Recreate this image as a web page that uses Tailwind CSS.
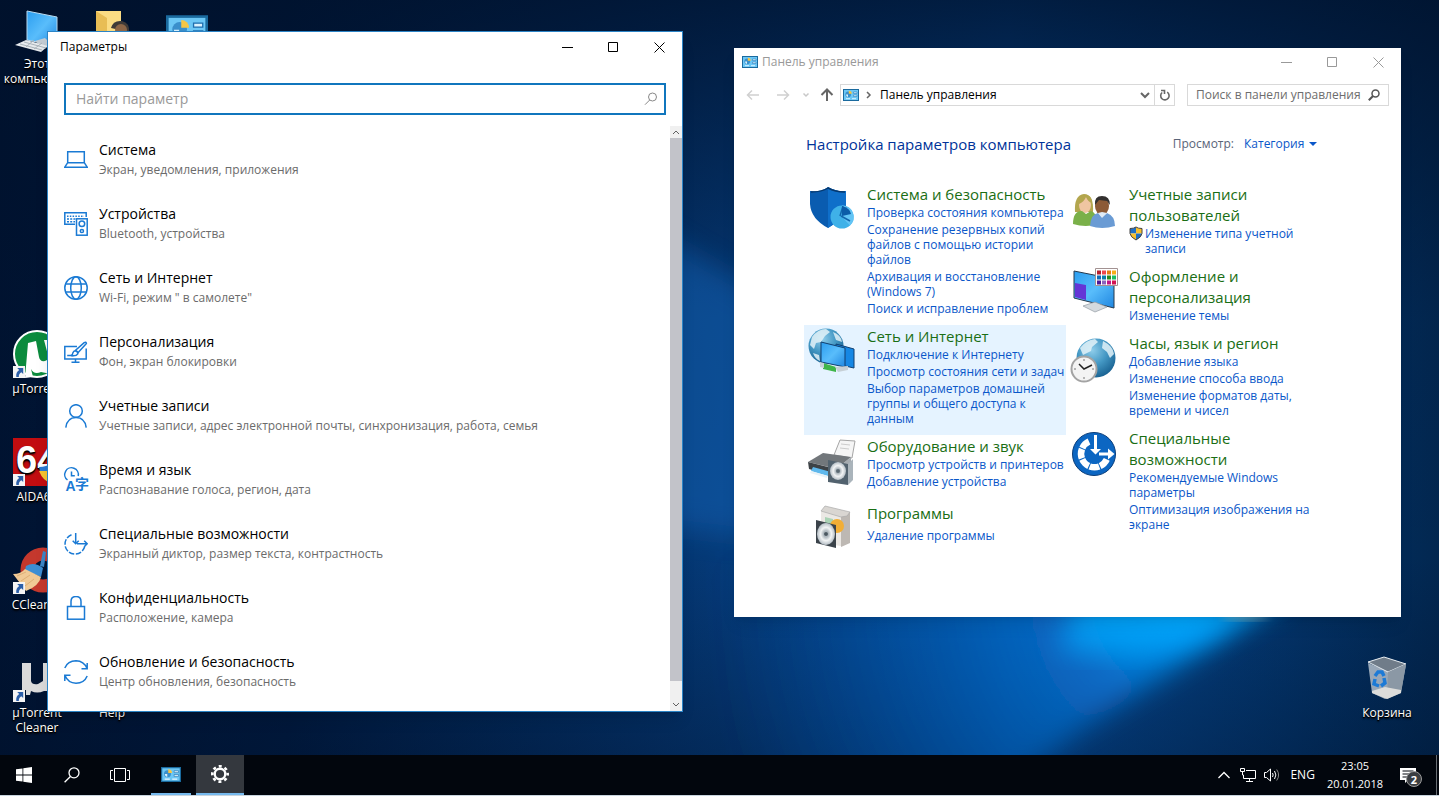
<!DOCTYPE html>
<html lang="ru">
<head>
    <meta charset="UTF-8">
    <meta name="viewport" content="width=device-width, initial-scale=1.0">
    <title>Рабочий стол</title>
    <script src="https://cdn.jsdelivr.net/npm/@tailwindcss/browser@4"></script>
</head>
<body class="relative h-screen overflow-hidden flex flex-col bg-[#001738] font-['Open_Sans','Noto_Sans_CJK_SC',sans-serif] text-xs text-black">

    <!-- общие значки -->
    <svg class="absolute w-0 h-0" aria-hidden="true">
        <defs>
            <linearGradient id="screen" x1="0" y1="0" x2="1" y2="1">
                <stop offset="0" stop-color="#2a9df0"/><stop offset="0.5" stop-color="#59bdfb"/><stop offset="1" stop-color="#1f86e0"/>
            </linearGradient>
            <radialGradient id="earth" cx="0.4" cy="0.3" r="0.75">
                <stop offset="0" stop-color="#8fcdea"/><stop offset="0.5" stop-color="#4498c4"/><stop offset="1" stop-color="#165e8e"/>
            </radialGradient>
            <radialGradient id="disc">
                <stop offset="0" stop-color="#fff"/><stop offset="0.25" stop-color="#aab4bb"/><stop offset="0.6" stop-color="#f2f4f5"/><stop offset="1" stop-color="#b5bec5"/>
            </radialGradient>
            <symbol id="panel" viewBox="0 0 16 12">
                <rect x="0.5" y="0.5" width="15" height="11" fill="#6cc7f5" stroke="#1a6a9e"/>
                <circle cx="5.2" cy="5.4" r="2.8" fill="#3a8fcb"/>
                <path d="M5.8 4.8V1.8a3 3 0 0 1 3 3z" fill="#f6c644"/>
                <path d="M3 5.5h2v2.5a2.6 2.6 0 0 1-2-2.5z" fill="#d9f1fd"/>
                <path d="M10.5 3h3.5v1.5h-3.5zM10.5 6h3.5v1.5h-3.5z" fill="#d9f1fd" stroke="#1f6fae" stroke-width="0.5"/>
                <path d="M3 9.7h4M9 9.7h4" stroke="#e8f8ff" stroke-width="0.9"/>
            </symbol>
            <symbol id="shortcut" viewBox="0 0 12 12">
                <rect width="12" height="12" fill="#f4f4f4"/>
                <path d="M4.2 2h6v6L8.3 6.300C6.300 7.500 5.800 9 5.800 11H3.300C2.800 8 4 5.300 6.200 4z" fill="#2b5ea8"/>
            </symbol>
        </defs>
    </svg>

    <!-- обои -->
    <svg class="absolute inset-0 w-full h-full" viewBox="0 0 1439 796" preserveAspectRatio="none" aria-hidden="true">
        <defs>
            <linearGradient id="sky">
                <stop offset="0" stop-color="#001331"/><stop offset="0.2" stop-color="#001a40"/><stop offset="0.5" stop-color="#053a78"/>
                <stop offset="0.7" stop-color="#0650a0"/><stop offset="0.9" stop-color="#03356c"/><stop offset="1" stop-color="#022750"/>
            </linearGradient>
            <linearGradient id="shade" x2="0" y2="1">
                <stop offset="0" stop-color="#00112b" stop-opacity="0.8"/><stop offset="0.4" stop-color="#00112b" stop-opacity="0.1"/>
                <stop offset="0.7" stop-color="#00112b" stop-opacity="0"/><stop offset="1" stop-color="#00112b" stop-opacity="0.45"/>
            </linearGradient>
            <radialGradient id="glow" cx="1190" cy="600" r="480" gradientUnits="userSpaceOnUse">
                <stop offset="0" stop-color="#00a5ff"/><stop offset="0.25" stop-color="#0a78dc" stop-opacity="0.75"/><stop offset="0.6" stop-color="#0862c0" stop-opacity="0.45"/><stop offset="1" stop-color="#0450a8" stop-opacity="0"/>
            </radialGradient>
            <filter id="soft" x="-20%" y="-20%" width="140%" height="140%"><feGaussianBlur stdDeviation="14"/></filter>
            <filter id="fine" x="-20%" y="-50%" width="140%" height="200%"><feGaussianBlur stdDeviation="5"/></filter>
        </defs>
        <rect width="1439" height="796" fill="url(#sky)"/>
        <rect width="1439" height="796" fill="url(#shade)"/>
        <path d="M1290 600L600 200V520L1290 600z" fill="#1268bd" opacity="0.45" filter="url(#soft)"/>
        <path d="M1290 580L1210 645L1080 730L980 810H740L720 560z" fill="url(#glow)" filter="url(#soft)"/>
        <path d="M1290 598L1215 634L1130 656L1060 650L1080 590z" fill="#00aaff" opacity="0.7" filter="url(#soft)"/>
        <ellipse cx="1245" cy="616" rx="24" ry="3" fill="#d8d0a8" opacity="0.6" filter="url(#fine)"/>
    </svg>

    <main class="relative flex-1">
        <!-- значки рабочего стола -->
        <a href="#" class="absolute left-0 top-2 w-[74px] flex flex-col items-center text-center text-white leading-[15px] text-shadow-sm text-shadow-black">
            <svg class="w-12 h-12" viewBox="0 0 48 48">
                <path d="M14 3l30 6v29l-30-6z" fill="url(#screen)" stroke="#b9d9ee"/>
                <path d="M22 33l10-3 8 8-10 2z" fill="#c3cbd2"/>
                <path d="M13 32l22 6-7 6-26-7z" fill="#e6eaed"/>
                <path d="M7 36l22 6M11 34l22 6M13 39l8-7M21 41l8-6" stroke="#a9b2b9" fill="none"/>
            </svg>
            <span>Этот компьютер</span>
        </a>
        <svg class="absolute left-[88px] top-2 w-12 h-12" viewBox="0 0 48 48">
            <path d="M8 3h25v40H8z" fill="#fbdc83"/><path d="M8 3l11 7v36L8 42z" fill="#e8bd55"/>
            <path d="M23 20q2-8 11-7 8 2 7 11z" fill="#3f3a37"/><circle cx="33" cy="22" r="6" fill="#8d6647"/>
        </svg>
        <svg class="absolute left-[166px] top-[15px] w-[42px] h-8"><use href="#panel"/></svg>
        <a href="#" class="absolute left-0 top-[330px] w-[74px] flex flex-col items-center text-center text-white leading-[15px] text-shadow-sm text-shadow-black">
            <svg class="w-12 h-[51px]" viewBox="0 0 48 51">
                <circle cx="24" cy="24" r="23" fill="#0b8b3d" stroke="#fff" stroke-width="2"/>
                <path d="M15 13l8-2 3 16q1 5 6 4l4-2-5-19h7v34l-10-2q-7 3-10-3l2 8-8 1z" fill="#fff"/>
                <use href="#shortcut" x="0" y="36" width="12" height="12"/>
            </svg>
            <span>µTorrent</span>
        </a>
        <a href="#" class="absolute left-0 top-[438px] w-[74px] flex flex-col items-center text-center text-white leading-[15px] text-shadow-sm text-shadow-black">
            <svg class="w-12 h-[51px]" viewBox="0 0 48 51">
                <rect width="48" height="48" fill="#c20d10"/>
                <text x="3" y="35" font-family="Liberation Sans" font-size="38" font-weight="bold" fill="#fff">64</text>
                <path d="M26 29q8 0 12-4v20q-10-3-12-16z" fill="#2a79d2"/><path d="M26 33h12v12q-8-2-12-12z" fill="#f5c430"/>
                <use href="#shortcut" x="0" y="36" width="12" height="12"/>
            </svg>
            <span>AIDA64</span>
        </a>
        <a href="#" class="absolute left-0 top-[546px] w-[74px] flex flex-col items-center text-center text-white leading-[15px] text-shadow-sm text-shadow-black">
            <svg class="w-12 h-[51px]" viewBox="0 0 48 51">
                <circle cx="30" cy="24" r="16" fill="none" stroke="#c4382d" stroke-width="13"/>
                <path d="M27 20l3-15 3 1-2 15z" fill="#3d86c6"/>
                <path d="M13 20q8-5 17 2l-2 9-16-7z" fill="#3c8ed4"/>
                <path d="M12 23l16 8q-2 9-15 14L0 28q8 0 12-5z" fill="#f0c995"/>
                <path d="M4 30l9-4M8 35l9-6M12 40l9-7" stroke="#deb077" fill="none"/>
                <use href="#shortcut" x="0" y="36" width="12" height="12"/>
            </svg>
            <span>CCleaner</span>
        </a>
        <a href="#" class="absolute left-0 top-[654px] w-[74px] flex flex-col items-center text-center text-white leading-[15px] text-shadow-sm text-shadow-black">
            <svg class="w-12 h-[51px]" viewBox="0 0 48 51">
                <path d="M9 9h9v18q1 4 7 3l5-3V9h9v28h-8q-7 3-13 0l-1 4H13V36H9z" fill="#dadada"/>
                <use href="#shortcut" x="0" y="36" width="12" height="12"/>
            </svg>
            <span>µTorrent Cleaner</span>
        </a>
        <a href="#" class="absolute left-[76px] top-[705px] w-[72px] text-center text-white leading-[15px] text-shadow-sm text-shadow-black">Help</a>
        <a href="#" class="absolute right-4 top-[654px] w-[72px] flex flex-col items-center text-center text-white leading-[15px] text-shadow-sm text-shadow-black">
            <svg class="w-12 h-[51px]" viewBox="0 0 48 51">
                <path d="M5 9l19 8 19-6-5 27-16 7L9 39z" fill="#a9b6c3" opacity="0.9"/>
                <path d="M5 8l16-5 22 7-18 8z" fill="#707c89" stroke="#e9eef2"/>
                <path d="M25 18l18-8-5 29-14 6z" fill="#8b98a5"/>
                <path d="M9 37l13-4 16 3v3l-14 6-15-6z" fill="#dcdcda"/>
                <path d="M12 22l3-4h4l2 4M21 24l1 5-4 3M16 32l-5-2 1-5" fill="none" stroke="#1c7ad6" stroke-width="3.500"/>
            </svg>
            <span>Корзина</span>
        </a>

        <!-- Параметры -->
        <section class="absolute left-[47px] top-[31px] w-[636px] bg-white border border-[#2b84c6] shadow-lg">
            <header class="flex items-center pl-3">
                <h1 class="flex-1 leading-[30px]">Параметры</h1>
                <button class="w-[46px] h-[30px] grid place-items-center" aria-label="Свернуть"><svg class="w-[11px] h-[11px]" viewBox="0 0 11 11" stroke="#000" fill="none"><path d="M0 5.500h11"/></svg></button>
                <button class="w-[46px] h-[30px] grid place-items-center" aria-label="Развернуть"><svg class="w-[11px] h-[11px]" viewBox="0 0 11 11" stroke="#000" fill="none"><path d="M0.500 0.500h9v9h-9z"/></svg></button>
                <button class="w-[46px] h-[30px] grid place-items-center" aria-label="Закрыть"><svg class="w-[11px] h-[11px]" viewBox="0 0 11 11" stroke="#000" fill="none"><path d="M0.500 0.500l10 10M10.500 0.500l-10 10"/></svg></button>
            </header>
            <div class="mt-[21px] mx-4 h-8 flex items-center border-2 border-[#1076bd] pl-2.5 pr-1.5">
                <input type="text" aria-label="Найти параметр" placeholder="Найти параметр" class="flex-1 text-sm outline-none placeholder:text-[#999999]">
                <svg class="w-3.5 h-3.5" viewBox="0 0 14 14" fill="none" stroke="#888"><circle cx="8.500" cy="5" r="4"/><path d="M5.700 8L1 12.700"/></svg>
            </div>
            <div class="mt-[11px] flex">
                <ul class="flex-1 pl-4 pt-0.5 pb-[7px] text-[#1a7ad4]">
                    <li><a href="#" class="h-16 flex items-center gap-[11px]">
                        <svg class="w-6 h-6" viewBox="0 0 24 24" fill="none" stroke="currentColor" stroke-width="1.500"><path d="M3.700 14.500V3.700h16.600v10.800M3.700 14.700h16.600l2.900 4.500H0.800z"/></svg>
                        <span class="leading-5 text-[#6b6b6b]"><span class="block text-sm leading-5 text-black">Система</span>Экран, уведомления, приложения</span>
                    </a></li>
                    <li><a href="#" class="h-16 flex items-center gap-[11px]">
                        <svg class="w-6 h-6" viewBox="0 0 24 24" fill="none" stroke="currentColor" stroke-width="1.500"><path d="M11 12.300H0.800V0.800h21.400V5"/><path d="M3 4.200h17" stroke-dasharray="1.500 1.300"/><path d="M3 7h8.500M3 9.800h8" stroke-dasharray="2 1.200"/><rect x="12.500" y="6.800" width="10.700" height="16.400"/><circle cx="17.900" cy="11.800" r="2.800"/><circle cx="17.900" cy="19" r="1.600"/></svg>
                        <span class="leading-5 text-[#6b6b6b]"><span class="block text-sm leading-5 text-black">Устройства</span>Bluetooth, устройства</span>
                    </a></li>
                    <li><a href="#" class="h-16 flex items-center gap-[11px]">
                        <svg class="w-6 h-6" viewBox="0 0 24 24" fill="none" stroke="currentColor" stroke-width="1.500"><circle cx="12" cy="12" r="11.200"/><ellipse cx="12" cy="12" rx="5.300" ry="11.200"/><path d="M2 8h20M2 16h20"/></svg>
                        <span class="leading-5 text-[#6b6b6b]"><span class="block text-sm leading-5 text-black">Сеть и Интернет</span>Wi-Fi, режим " в самолете"</span>
                    </a></li>
                    <li><a href="#" class="h-16 flex items-center gap-[11px]">
                        <svg class="w-6 h-6" viewBox="0 0 24 24" fill="none" stroke="currentColor" stroke-width="1.500"><path d="M13 6.500H0.800v12.400h21.400V8.500M11.500 19v3M7.500 22.200h8"/><path d="M20.200 2.700q2-1.200 2.200 0.800l-8.200 9-2.600-2.200z"/><path d="M11.300 10.800q2.600 0.500 2.500 3-1.500 2.500-6.800 1.700 1.800-0.500 1.800-2.500 0.700-2.200 2.500-2.200z"/><path d="M3.200 15.500h6"/></svg>
                        <span class="leading-5 text-[#6b6b6b]"><span class="block text-sm leading-5 text-black">Персонализация</span>Фон, экран блокировки</span>
                    </a></li>
                    <li><a href="#" class="h-16 flex items-center gap-[11px]">
                        <svg class="w-6 h-6" viewBox="0 0 24 24" fill="none" stroke="currentColor" stroke-width="1.500"><circle cx="12" cy="7" r="6.300"/><path d="M1.800 23.700q1.200-10.200 10.200-10.200t10.200 10.200"/></svg>
                        <span class="leading-5 text-[#6b6b6b]"><span class="block text-sm leading-5 text-black">Учетные записи</span>Учетные записи, адрес электронной почты, синхронизация, работа, семья</span>
                    </a></li>
                    <li><a href="#" class="h-16 flex items-center gap-[11px]">
                        <svg class="w-6 h-6 overflow-visible" viewBox="0 0 24 24" fill="none" stroke="currentColor" stroke-width="1.500"><path d="M3.500 12A6.800 6.800 0 1 1 14.200 8M7.500 3.500v4.200h3.300"/><text x="1.500" y="23" font-family="Liberation Sans" font-size="14" font-weight="bold" fill="currentColor" stroke="none">A</text><text x="11" y="21" font-family="Noto Sans CJK SC" font-size="14" font-weight="bold" fill="currentColor" stroke="none">字</text></svg>
                        <span class="leading-5 text-[#6b6b6b]"><span class="block text-sm leading-5 text-black">Время и язык</span>Распознавание голоса, регион, дата</span>
                    </a></li>
                    <li><a href="#" class="h-16 flex items-center gap-[11px]">
                        <svg class="w-6 h-6" viewBox="0 0 24 24" fill="none" stroke="currentColor" stroke-width="1.500"><path d="M7.500 2.700A10 10 0 1 0 20.700 14.500" stroke-dasharray="5.500 1.600"/><path d="M11.700 1v10.500M8.700 8.700l3 3 3-3M13 11.800h10M20.200 8.800l3 3-3 3"/></svg>
                        <span class="leading-5 text-[#6b6b6b]"><span class="block text-sm leading-5 text-black">Специальные возможности</span>Экранный диктор, размер текста, контрастность</span>
                    </a></li>
                    <li><a href="#" class="h-16 flex items-center gap-[11px]">
                        <svg class="w-6 h-6" viewBox="0 0 24 24" fill="none" stroke="currentColor" stroke-width="1.500"><rect x="3.500" y="10.500" width="17" height="12.700"/><path d="M7 10.500V5.500q0-5 5-5t5 5v5"/></svg>
                        <span class="leading-5 text-[#6b6b6b]"><span class="block text-sm leading-5 text-black">Конфиденциальность</span>Расположение, камера</span>
                    </a></li>
                    <li><a href="#" class="h-16 flex items-center gap-[11px]">
                        <svg class="w-6 h-6" viewBox="0 0 24 24" fill="none" stroke="currentColor" stroke-width="1.500"><path d="M0.800 8Q3.800 0.800 12 0.800q8 0.200 11 7.700M23.200 3v5.700h-5.700M23.200 16q-3 7.200-11.200 7.200-8-0.200-11-7.700M0.800 21v-5.700h5.700"/></svg>
                        <span class="leading-5 text-[#6b6b6b]"><span class="block text-sm leading-5 text-black">Обновление и безопасность</span>Центр обновления, безопасность</span>
                    </a></li>
                </ul>
                <div class="w-3 flex flex-col items-center justify-between bg-[#f0f0f0]">
                    <svg class="w-2 h-3" viewBox="0 0 8 12" fill="none" stroke="#606060"><path d="M1 8l3-3 3 3"/></svg>
                    <div class="flex-1 w-full bg-[#c2c3c9] mb-[18px]"></div>
                    <svg class="w-2 h-3" viewBox="0 0 8 12" fill="none" stroke="#606060"><path d="M1 4l3 3 3-3"/></svg>
                </div>
            </div>
        </section>

        <!-- Панель управления -->
        <section class="absolute left-[734px] top-12 w-[667px] bg-white shadow-lg pb-[66px]">
            <header class="flex items-center pl-2 gap-1 text-[#999999]">
                <svg class="w-4 h-3"><use href="#panel"/></svg>
                <h1 class="flex-1 leading-[28px]">Панель управления</h1>
                <button class="w-[46px] h-7 grid place-items-center" aria-label="Свернуть"><svg class="w-[11px] h-[11px]" viewBox="0 0 11 11" stroke="currentColor" fill="none"><path d="M0 5.500h11"/></svg></button>
                <button class="w-[46px] -ml-1 h-7 grid place-items-center" aria-label="Развернуть"><svg class="w-[11px] h-[11px]" viewBox="0 0 11 11" stroke="currentColor" fill="none"><path d="M0.500 0.500h9v9h-9z"/></svg></button>
                <button class="w-[46px] -ml-1 h-7 grid place-items-center" aria-label="Закрыть"><svg class="w-[11px] h-[11px]" viewBox="0 0 11 11" stroke="currentColor" fill="none"><path d="M0.500 0.500l10 10M10.500 0.500l-10 10"/></svg></button>
            </header>
            <nav class="mt-2 pl-3 pr-3 flex items-center">
                <button class="w-[30px]" aria-label="Назад"><svg class="w-3.5 h-3" viewBox="0 0 14 12" fill="none" stroke="#d0d0d0" stroke-width="1.500"><path d="M13 6H2M6 1.500L1.500 6 6 10.500"/></svg></button>
                <button class="w-[26px]" aria-label="Вперед"><svg class="w-3.5 h-3" viewBox="0 0 14 12" fill="none" stroke="#d0d0d0" stroke-width="1.500"><path d="M1 6h11M8 1.500L12.500 6 8 10.500"/></svg></button>
                <button class="w-[18px]" aria-label="Последние места"><svg class="w-2 h-2" viewBox="0 0 8 8" fill="none" stroke="#c8c8c8" stroke-width="1.500"><path d="M1.500 2.500L4 5l2.500-2.500"/></svg></button>
                <button class="w-5" aria-label="Вверх"><svg class="w-3.5 h-3.5" viewBox="0 0 14 14" fill="none" stroke="#666" stroke-width="2"><path d="M7 13V2M1.500 7L7 1.500 12.500 7"/></svg></button>
                <div class="flex-1 h-[22px] flex items-center border border-[#d9d9d9] pl-0.5">
                    <svg class="w-4 h-3"><use href="#panel"/></svg>
                    <svg class="ml-1.5 w-2 h-2" viewBox="0 0 8 8" fill="none" stroke="#666" stroke-width="1.500"><path d="M2 1l3 3-3 3"/></svg>
                    <a href="#" class="ml-[7px] flex-1">Панель управления</a>
                    <button class="w-[18px] grid place-items-center" aria-label="Журнал"><svg class="w-2.5 h-2.5" viewBox="0 0 10 10" fill="none" stroke="#666" stroke-width="2"><path d="M1 3l4 4 4-4"/></svg></button>
                    <button class="w-5 h-full border-l border-[#d9d9d9] grid place-items-center" aria-label="Обновить"><svg class="w-3 h-3" viewBox="0 0 12 12" fill="none" stroke="#666" stroke-width="1.600"><path d="M8.200 3.200A4.200 4.200 0 1 1 3.200 3.500M2 1.500h3.500v3.500"/></svg></button>
                </div>
                <div class="ml-3 w-[202px] h-[22px] flex items-center border border-[#d9d9d9] pl-2 pr-2">
                    <input type="text" aria-label="Поиск в панели управления" placeholder="Поиск в панели управления" class="min-w-0 flex-1 outline-none placeholder:text-[#6d6d6d]">
                    <svg class="w-3 h-3" viewBox="0 0 12 12" fill="none" stroke="#555" stroke-width="1.500"><circle cx="7.500" cy="4.500" r="3.500"/><path d="M5 7L0.800 11.200" stroke-width="2"/></svg>
                </div>
            </nav>
            <div class="mt-[27px] pl-[72px] pr-[84px] flex items-center">
                <h2 class="flex-1 text-[15px] leading-[22px] text-[#003399]">Настройка параметров компьютера</h2>
                <label for="view" class="text-[#5a6478]">Просмотр:</label>
                <select id="view" class="ml-2.5 appearance-none text-[#0a57c9]"><option>Категория</option></select>
                <svg class="ml-1 w-2 h-1" viewBox="0 0 8 4"><path d="M0 0h8L4 4z" fill="#0a57c9"/></svg>
            </div>

            <div class="mt-7 ml-[70px] w-[524px] grid grid-cols-2 items-start text-[#0a57c9] leading-[15px]">
                <div>
                    <article class="flex gap-[11px] pl-1 pt-px pb-[9px]">
                        <svg class="shrink-0 w-12 h-12" viewBox="0 0 48 48">
                            <path d="M2 7Q14 8 20 3q8 5 18 4v13q-1 14-18 24Q3 35 2 20z" fill="#0a5cb0"/><path d="M20 3q8 5 18 4v13q-1 14-18 24z" fill="#0f6fca"/><path d="M3 8q11 0 17-4 7 4 17 4" fill="none" stroke="#06396f" stroke-width="1.500"/>
                            <circle cx="34" cy="33" r="11.500" fill="#3fb1e8"/><path d="M34 33V21.500a11.500 11.500 0 0 1 8 20z" fill="#62c4f5"/><path d="M32 32l3-10M33 32l9 5" stroke="#1266ad" stroke-width="1.500"/><path d="M34 32V22q8 2 9 8z" fill="#0b5ca8"/>
                        </svg>
                        <div>
                            <h3 class="text-[15px] leading-[21px] text-[#1a6e14]"><a href="#">Система и безопасность</a></h3>
                            <ul class="flex flex-col gap-0.5">
                                <li><a href="#">Проверка состояния компьютера</a></li>
                                <li><a href="#">Сохранение резервных копий<br>файлов с помощью истории<br>файлов</a></li>
                                <li><a href="#">Архивация и восстановление<br>(Windows 7)</a></li>
                                <li><a href="#">Поиск и исправление проблем</a></li>
                            </ul>
                        </div>
                    </article>
                    <article class="flex gap-[11px] pl-1 pt-px pb-[9px] bg-[#e5f3ff]">
                        <svg class="shrink-0 w-12 h-12" viewBox="0 0 48 48">
                            <circle cx="18" cy="20" r="17.500" fill="url(#earth)"/><path d="M4 11q6-8 14-8l4 3-5 4-4 6-5 1-2 6-4-4zM25 6q8 3 9 10l-6-2zM5 27l6 2 1 6q-5-2-7-8z" fill="#e3f2f8" opacity="0.85"/>
                            <path d="M28 18l18 5v19l-18-4z" fill="#1687e4" stroke="#103f70"/><path d="M13 16l24 6v19l-24-5z" fill="url(#screen)" stroke="#103f70"/>
                            <path d="M15 37l13 4v5l-13-3z" fill="#3fb549"/><path d="M12 36l4 1v5l-4-1zM27 41l13-1v4l-10 2z" fill="#c7d0d6"/>
                        </svg>
                        <div>
                            <h3 class="text-[15px] leading-[21px] text-[#1a6e14]"><a href="#">Сеть и Интернет</a></h3>
                            <ul class="flex flex-col gap-0.5">
                                <li><a href="#">Подключение к Интернету</a></li>
                                <li><a href="#">Просмотр состояния сети и задач</a></li>
                                <li><a href="#">Выбор параметров домашней<br>группы и общего доступа к<br>данным</a></li>
                            </ul>
                        </div>
                    </article>
                    <article class="min-h-[67px] flex gap-[11px] pl-1 pt-px pb-[9px]">
                        <svg class="shrink-0 mt-0.5 w-12 h-12" viewBox="0 0 48 48">
                            <path d="M32 2l15 1-3 17-18-3z" fill="#f5f5f5" stroke="#a5a5a5"/><path d="M33 6l9 1M32 10l9 1" stroke="#ccc"/>
                            <path d="M0 24l15-9 28 4-14 12z" fill="#72777b"/><path d="M0 24l28 7v8L1 31z" fill="#3d4246"/><path d="M28 31l15-12v9L29 39z" fill="#a5abb0"/>
                            <path d="M5 29l18 5-3 4L3 33z" fill="#5fb8ec"/><path d="M3 33l17 5-1 2L2 35z" fill="#e9f2f7"/>
                            <path d="M20 22l20 4v21l-20-3z" fill="#52626e"/><path d="M40 26l5-5v21l-5 5z" fill="#aab4bb"/><ellipse cx="30" cy="33" rx="8" ry="9" fill="url(#disc)"/><circle cx="30" cy="33" r="2" fill="#5a6872"/>
                        </svg>
                        <div>
                            <h3 class="text-[15px] leading-[21px] text-[#1a6e14]"><a href="#">Оборудование и звук</a></h3>
                            <ul class="flex flex-col gap-0.5">
                                <li><a href="#">Просмотр устройств и принтеров</a></li>
                                <li><a href="#">Добавление устройства</a></li>
                            </ul>
                        </div>
                    </article>
                    <article class="flex gap-[11px] pl-1 pt-px">
                        <svg class="shrink-0 w-12 h-12" viewBox="0 0 48 48">
                            <path d="M13 8l20 4v31l-20-3z" fill="#ebe8e4"/><path d="M33 12l9-3v31l-9 4z" fill="#bdb8b3"/><path d="M13 8l4-5 25 6-3 4-6 1z" fill="#d9d6d2" stroke="#aaa" stroke-width="0.700"/>
                            <path d="M17 14l8 2v10l-8-2z" fill="#a9d2b4"/><circle cx="29" cy="23" r="7" fill="#f2ae35"/>
                            <path d="M8 17l20 5v23L8 40z" fill="#3b434a"/><ellipse cx="18" cy="31" rx="9" ry="11" fill="url(#disc)"/><circle cx="18" cy="31" r="2" fill="#4b5861"/>
                        </svg>
                        <div>
                            <h3 class="text-[15px] leading-[21px] text-[#1a6e14]"><a href="#">Программы</a></h3>
                            <p class="mt-1"><a href="#">Удаление программы</a></p>
                        </div>
                    </article>
                </div>
                <div>
                    <article class="flex gap-[11px] pl-1 pt-px pb-[9px]">
                        <svg class="shrink-0 w-12 h-12" viewBox="0 0 48 48">
                            <path d="M5 28Q4 11 14 10q10 0 9 18z" fill="#b3a64e"/><ellipse cx="15" cy="21" rx="6" ry="8" fill="#efc5a1"/><path d="M9 20q5-2 7-7 2 5 6 6 0-8-7-8t-6 9z" fill="#b3a64e"/>
                            <path d="M3 40q0-13 9-13l4 3 5-3q6 2 7 13-12 4-25 0z" fill="#7ab049"/>
                            <ellipse cx="32" cy="22" rx="7" ry="9" fill="#8c5a36"/><path d="M25 21q-1-9 7-9t8 9l-3-4-8-1z" fill="#33302f"/>
                            <path d="M20 42q1-12 8-13l4 4 5-4q8 3 8 13-13 4-25 0z" fill="#6a9bd4"/><path d="M28 29l4 5 5-5-5-1z" fill="#dfeaf5"/>
                        </svg>
                        <div>
                            <h3 class="text-[15px] leading-[21px] text-[#1a6e14]"><a href="#">Учетные записи<br>пользователей</a></h3>
                            <p class="flex gap-0.5">
                                <svg class="w-3.5 h-[15px]" viewBox="0 0 14 15"><path d="M1 2.500q4 0 6-1.500v6.500H1z" fill="#1f6fc4"/><path d="M7 1q2 1.500 6 1.500v5H7z" fill="#f6c02d"/><path d="M1 7.500h6V14Q1.500 11 1 7.500z" fill="#f6c02d"/><path d="M13 7.500H7V14q5.500-3 6-6.500z" fill="#1f6fc4"/><path d="M1 2.500q4 0 6-1.500 2 1.500 6 1.500v5q-0.500 3.500-6 6.500-5.500-3-6-6.500z" fill="none" stroke="#444"/></svg>
                                <a href="#">Изменение типа учетной<br>записи</a>
                            </p>
                        </div>
                    </article>
                    <article class="flex gap-[11px] pl-1 pt-px pb-[9px]">
                        <svg class="shrink-0 w-12 h-12" viewBox="0 0 48 48">
                            <path d="M4 5l40 8v29L4 32z" fill="url(#screen)" stroke="#26394d"/><path d="M5 17l11 2v15L5 31z" fill="#6435d6"/>
                            <path d="M13 40l12-4 12 5-12 5z" fill="#d5dade" stroke="#949ca3" stroke-width="0.700"/>
                            <path d="M25.500 2.500h22v17h-22z" fill="#fff" stroke="#a29292"/>
                            <g stroke-width="4" stroke-dasharray="4 1"><path d="M27 6.500h4" stroke="#b81d2c"/><path d="M32 6.500h4" stroke="#f0464c"/><path d="M37 6.500h4" stroke="#e77c11"/><path d="M42 6.500h4" stroke="#f8ac16"/><path d="M27 11.500h4" stroke="#136bb4"/><path d="M32 11.500h4" stroke="#0c7daa"/><path d="M37 11.500h4" stroke="#2c8a1d"/><path d="M42 11.500h4" stroke="#1bbd60"/><path d="M27 16.500h4" stroke="#4b1496"/><path d="M32 16.500h4" stroke="#8964bd"/><path d="M37 16.500h4" stroke="#bd1689"/><path d="M42 16.500h4" stroke="#d31451"/></g>
                        </svg>
                        <div>
                            <h3 class="text-[15px] leading-[21px] text-[#1a6e14]"><a href="#">Оформление и<br>персонализация</a></h3>
                            <p><a href="#">Изменение темы</a></p>
                        </div>
                    </article>
                    <article class="flex gap-[11px] pl-1 pt-px pb-[9px]">
                        <svg class="shrink-0 mt-1 w-12 h-12" viewBox="0 0 48 48">
                            <circle cx="26" cy="21" r="19.500" fill="url(#earth)"/><path d="M10 11q6-8 15-9l3 3-6 5-1 4-8 4zM33 4q10 5 11 13l-4 4-3-6-5-4z" fill="#e3f2f8" opacity="0.85"/>
                            <circle cx="14" cy="32" r="12.500" fill="#f3f3f3" stroke="#a3a3a3" stroke-width="2"/><path d="M14 22v2M14 40v2M4 32h2M22 32h2" stroke="#777"/><path d="M9 27l5 5 8-4" fill="none" stroke="#222" stroke-width="1.500"/>
                        </svg>
                        <div>
                            <h3 class="text-[15px] leading-[21px] text-[#1a6e14]"><a href="#">Часы, язык и регион</a></h3>
                            <ul class="flex flex-col gap-0.5">
                                <li><a href="#">Добавление языка</a></li>
                                <li><a href="#">Изменение способа ввода</a></li>
                                <li><a href="#">Изменение форматов даты,<br>времени и чисел</a></li>
                            </ul>
                        </div>
                    </article>
                    <article class="flex gap-[11px] pl-1 pt-px">
                        <svg class="shrink-0 mt-0.5 w-12 h-12" viewBox="0 0 48 48">
                            <circle cx="24" cy="24" r="21.500" fill="#0c66c2" stroke="#0a3d7a"/>
                            <path d="M19 11.500A13.500 13.500 0 1 0 37 29" fill="none" stroke="#fff" stroke-width="6.500" stroke-dasharray="9.500 1"/>
                            <path d="M24 5h3v14h4l-5.500 5.500L20 19h4zM29 22.500h9v-4l6.500 5.500-6.500 5.500v-4h-9z" fill="#fff"/>
                        </svg>
                        <div>
                            <h3 class="text-[15px] leading-[21px] text-[#1a6e14]"><a href="#">Специальные<br>возможности</a></h3>
                            <ul class="flex flex-col gap-0.5">
                                <li><a href="#">Рекомендуемые Windows<br>параметры</a></li>
                                <li><a href="#">Оптимизация изображения на<br>экране</a></li>
                            </ul>
                        </div>
                    </article>
                </div>
            </div>
        </section>
    </main>

    <!-- панель задач -->
    <footer class="relative h-[41px] flex items-stretch bg-[#02060d] border-b border-[#c8d4de] text-white">
        <button class="w-12 grid place-items-center" aria-label="Пуск"><svg class="w-4 h-4" viewBox="0 0 16 16" fill="#fff"><path d="M0 2.300l6.500-0.900v6.100H0zM7.300 1.300L16 0v7.500H7.300zM0 8.400h6.500v6.200L0 13.700zM7.300 8.400H16V16l-8.700-1.300z"/></svg></button>
        <button class="w-12 grid place-items-center" aria-label="Поиск"><svg class="w-4 h-4" viewBox="0 0 16 16" fill="none" stroke="#fff" stroke-width="1.300"><circle cx="10" cy="5.800" r="5"/><path d="M6.400 9.500L0.600 15.300"/></svg></button>
        <button class="w-12 grid place-items-center" aria-label="Представление задач"><svg class="w-5 h-3.5" viewBox="0 0 20 14" fill="none" stroke="#fff"><path d="M4.500 0.500h11v13h-11zM3 2.500H0.500v9H3M17 2.500h2.500v9H17"/></svg></button>
        <button class="ml-[7px] w-10 grid place-items-center border-b-2 border-[#76b9ed]" aria-label="Панель управления"><svg class="w-5 h-[15px]"><use href="#panel"/></svg></button>
        <button class="ml-[5px] w-12 grid place-items-center bg-[#34383e] border-b-2 border-[#76b9ed]" aria-label="Параметры"><svg class="w-[18px] h-[18px]" viewBox="0 0 18 18" fill="none" stroke="#fff"><circle cx="9" cy="9" r="5.300" stroke-width="2.400"/><circle cx="9" cy="9" r="7.700" stroke-width="2.600" stroke-dasharray="3 3.048" stroke-dashoffset="1.500"/></svg></button>
        <div class="ml-auto flex items-center">
            <button aria-label="Скрытые значки"><svg class="w-3 h-2" viewBox="0 0 12 8" fill="none" stroke="#fff" stroke-width="1.300"><path d="M0.500 7L6 1.500 11.500 7"/></svg></button>
            <button class="ml-2.5" aria-label="Сеть"><svg class="w-4 h-4" viewBox="0 0 16 16" fill="none" stroke="#fff"><path d="M6 3.500h9.500v8H3.500V8M9.500 11.500v3M6 14.500h7M0.500 1.500h4v3h-4zM2.500 4.500V8h1"/></svg></button>
            <button class="ml-2" aria-label="Громкость"><svg class="w-4 h-4" viewBox="0 0 16 16" fill="none" stroke="#fff"><path d="M0.500 5.500h2l4-3.500v12l-4-3.500h-2zM8.500 6q1.300 2 0 4M10.500 4q2.800 4 0 8"/><path d="M12.700 2.500q3.800 5.500 0 11" stroke="#888"/></svg></button>
            <button class="ml-2.5">ENG</button>
            <time class="ml-3 text-center text-[11px] leading-[18px]">23:05<br>20.01.2018</time>
            <button class="relative ml-4 w-6 h-6" aria-label="Уведомления: 2">
                <svg class="w-[18px] h-[18px]" viewBox="0 0 18 18"><path d="M1 2h16v12H9l-3 3v-3H1z" fill="#fff"/><path d="M3.500 5h11M3.500 8h11M3.500 11h7" stroke="#02060d"/></svg>
                <span class="absolute left-[7px] top-2 w-4 h-4 grid place-items-center rounded-full bg-[#3a3d41] border border-[#9a9a9a] text-[11px] font-bold leading-none">2</span>
            </button>
            <span class="ml-[13px] mr-0.5 self-stretch w-px bg-[#6a6f75]"></span>
        </div>
    </footer>
</body>
</html>
